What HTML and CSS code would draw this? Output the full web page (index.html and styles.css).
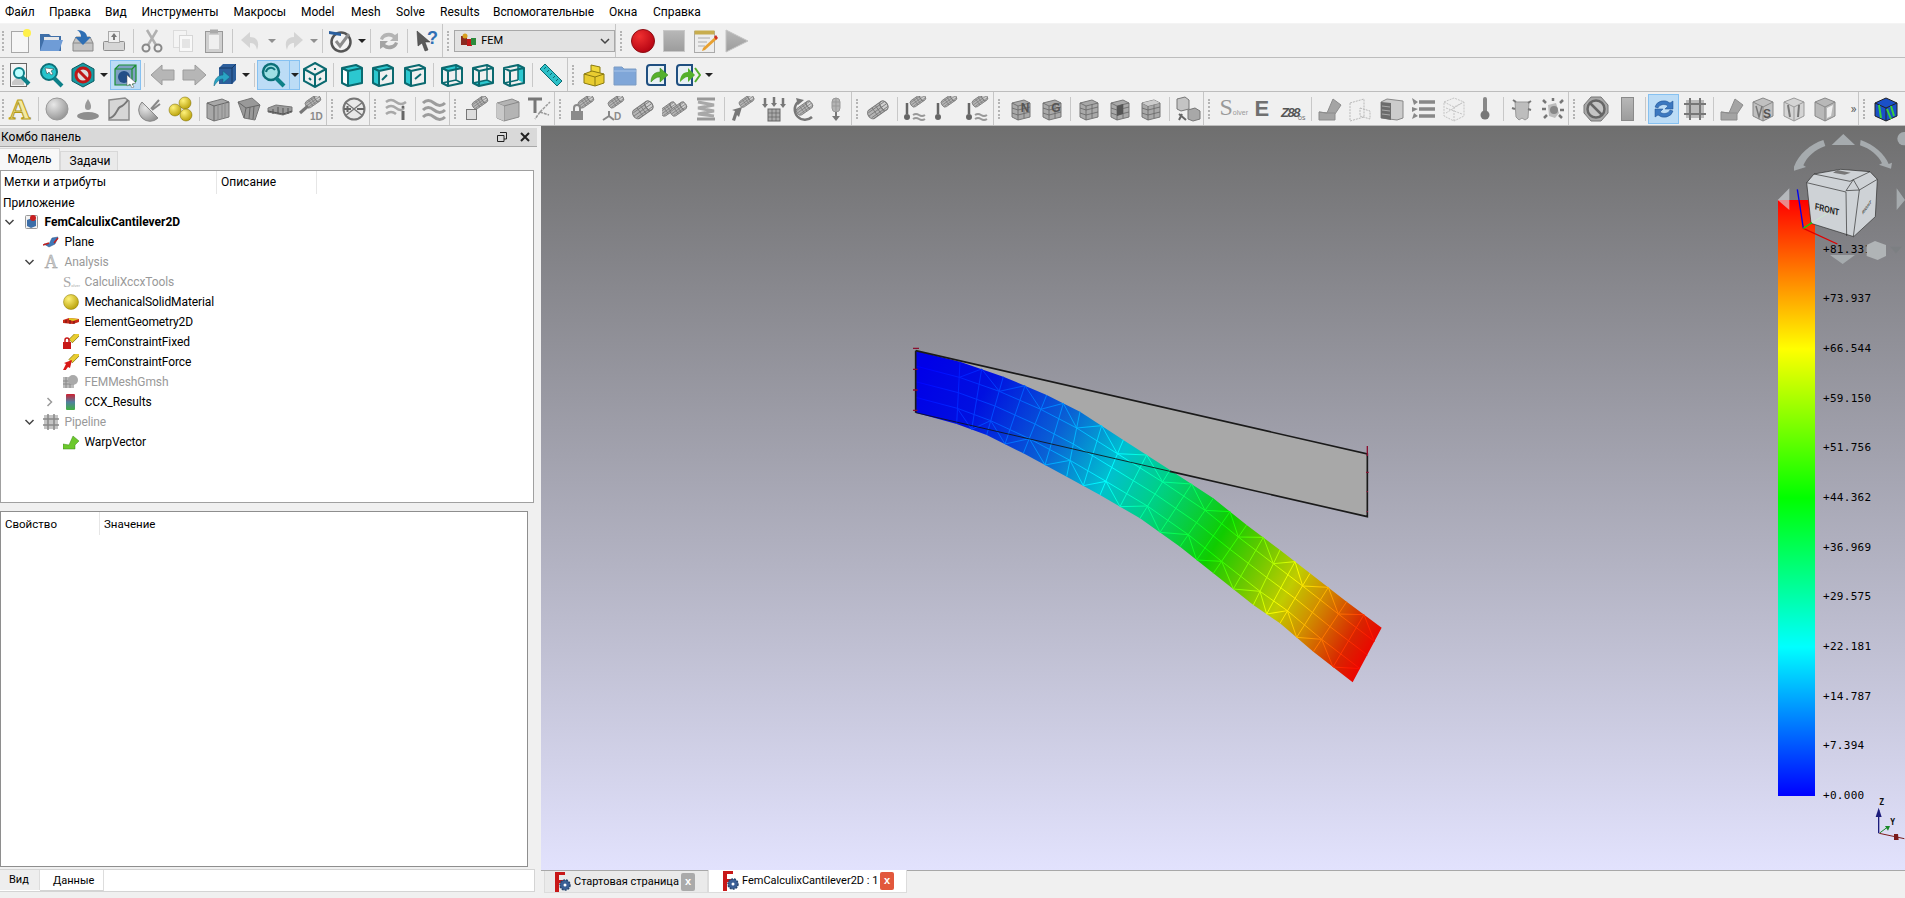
FILE: index.html
```html
<!DOCTYPE html>
<html lang="ru">
<head>
<meta charset="utf-8">
<title>FreeCAD</title>
<link rel="stylesheet" href="styles.css">
</head>
<body>
<svg class="defs" aria-hidden="true">
<defs>
<radialGradient id="gs" cx=".35" cy=".3" r=".8"><stop offset="0" stop-color="#e8e8e8"/><stop offset="1" stop-color="#8e8e8e"/></radialGradient>
<radialGradient id="gy" cx=".35" cy=".3" r=".8"><stop offset="0" stop-color="#fff27a"/><stop offset="1" stop-color="#b39a00"/></radialGradient>
<radialGradient id="gr" cx=".35" cy=".3" r=".8"><stop offset="0" stop-color="#f03030"/><stop offset="1" stop-color="#b00010"/></radialGradient>
<linearGradient id="gst" x1="0" y1="0" x2="0" y2="1"><stop offset="0" stop-color="#b8b8b8"/><stop offset="1" stop-color="#9c9c9c"/></linearGradient>
<linearGradient id="gbar" x1="0" y1="0" x2="0" y2="1"><stop offset="0" stop-color="#d02030"/><stop offset=".5" stop-color="#5080a0"/><stop offset="1" stop-color="#40b040"/></linearGradient>
<g id="mcg" transform="rotate(-35 13 13)"><path d="M4 8h15a3.5 5 0 0 1 0 10H4a3.500 5 0 0 1 0-10z" fill="#b4b4b4" stroke="#777"/><ellipse cx="19" cy="13" rx="3.500" ry="5" fill="#cfcfcf" stroke="#777"/><path d="M8 8v10M12 8v10M16 8v10M1 13h21M2 10h20M2 16h20" stroke="#777" stroke-width=".8" fill="none"/></g>
<g id="thg"><path d="M4 4v11" stroke="#666" stroke-width="2.500"/><circle cx="4" cy="18" r="3" fill="#666"/></g>
<g id="wvg"><path d="M10 17q3-2 6 0t6 0M10 21q3-2 6 0t6 0" fill="none" stroke="#999" stroke-width="2"/></g>
<g id="bxg" fill="none" stroke="#0b6a70" stroke-width="2" stroke-linejoin="round"><path d="M3 6l14-3 6 3v15l-14 3-6-3zM3 6l6 3 14-3M9 9v15"/></g>
<g id="mbg"><path d="M4 7l12-3 6 3v14l-12 3-6-3z" fill="#a9a9a9" stroke="#777"/><path d="M10 10v14M16 8v14M4 12l6 2 12-3M4 17l6 2 12-3M4 7l6 3 12-3" stroke="#666" fill="none" stroke-width=".8"/></g>
</defs>

<symbol id="new" viewBox="0 0 26 26"><rect x="4.500" y="3.500" width="17" height="21" fill="#f6f6f6" stroke="#a8a8a8"/><circle cx="20" cy="5" r="4" fill="#fff04a"/></symbol>
<symbol id="open" viewBox="0 0 26 26"><path d="M2 6h9l2 2h10v15H2z" fill="#3f6fa8"/><path d="M6 9h15v6H6z" fill="#e8e8e8"/><path d="M2 23l4-11h19l-4 11z" fill="#6f9cd6"/></symbol>
<symbol id="save" viewBox="0 0 26 26"><path d="M3 15l3-6h14l3 6v8H3z" fill="#c4c4c4" stroke="#8a8a8a"/><path d="M3 15h20" stroke="#8a8a8a"/><path d="M7 2c6 0 10 3 10 7h4l-8 8-8-8h6c0-3-1-5-4-7z" fill="#2f6fb4"/></symbol>
<symbol id="print" viewBox="0 0 26 26"><rect x="2.500" y="13.500" width="21" height="9" rx="1" fill="#d6d6d6" stroke="#8e8e8e"/><rect x="7.500" y="3.500" width="11" height="11" fill="#efefef" stroke="#aaa"/><path d="M13 5l-3 4h2v3h2V9h2z" fill="#777"/></symbol>
<symbol id="cut" viewBox="0 0 26 26"><path d="M8 2l9 15M18 2L9 17" stroke="#b0b0b0" stroke-width="2.500" fill="none"/><circle cx="7" cy="20" r="3.500" fill="none" stroke="#888" stroke-width="2"/><circle cx="19" cy="20" r="3.500" fill="none" stroke="#888" stroke-width="2"/></symbol>
<symbol id="copy" viewBox="0 0 26 26"><rect x="3.500" y="2.500" width="13" height="17" fill="#f4f4f4" stroke="#dcdcdc"/><rect x="9.500" y="7.500" width="13" height="16" fill="#f8f8f8" stroke="#d6d6d6"/><rect x="12" y="11" width="8" height="9" fill="#e4e4e4"/></symbol>
<symbol id="paste" viewBox="0 0 26 26"><rect x="4.500" y="3.500" width="17" height="21" fill="#cfcfcf" stroke="#999"/><rect x="8" y="7" width="10" height="14" fill="#efefef"/><rect x="9" y="1.500" width="8" height="4" fill="#aaa"/></symbol>
<symbol id="undo" viewBox="0 0 26 26"><path d="M12 4L3 12l9 8v-5c4 0 6 2 7 7 3-8 0-13-7-13z" fill="#d4d4d4"/></symbol>
<symbol id="redo" viewBox="0 0 26 26"><path d="M14 4l9 8-9 8v-5c-4 0-6 2-7 7-3-8 0-13 7-13z" fill="#d4d4d4"/></symbol>
<symbol id="macro" viewBox="0 0 26 26"><circle cx="13" cy="14" r="9.500" fill="#f4f4f4" stroke="#555" stroke-width="2.500"/><path d="M8 13l4 5 9-12" fill="none" stroke="#8c8c8c" stroke-width="3"/><path d="M1 3l12 2v3L1 6z" fill="#2a5f9e"/></symbol>
<symbol id="refr" viewBox="0 0 26 26"><path d="M4 11a9 8 0 0 1 15-4l3-2v8h-8l3-3a6 5 0 0 0-10 2z" fill="#b4b4b4"/><path d="M22 15a9 8 0 0 1-15 4l-3 2v-8h8l-3 3a6 5 0 0 0 10-2z" fill="#a4a4a4"/></symbol>
<symbol id="arrow" viewBox="0 0 26 26"><path d="M3 3l13 11h-5l3 8-3 1-3-8-4 3z" fill="#5a5a5a" stroke="#333" stroke-width=".5"/></symbol>
<symbol id="femc" viewBox="0 0 18 18"><rect x="1" y="4" width="6" height="9" fill="#8a2a20"/><rect x="7" y="7" width="5" height="7" fill="#c01818"/><rect x="11" y="6" width="5" height="7" fill="#2c8a3c"/><circle cx="5" cy="4" r="2.500" fill="#d8a020"/></symbol>
<symbol id="rec" viewBox="0 0 26 26"><circle cx="13" cy="13" r="11.500" fill="url(#gr)" stroke="#8e0e14"/></symbol>
<symbol id="stop" viewBox="0 0 26 26"><rect x="2.500" y="2.500" width="21" height="21" fill="url(#gst)" stroke="#c8c8c8"/></symbol>
<symbol id="note" viewBox="0 0 26 26"><rect x="2.500" y="3.500" width="20" height="21" fill="#ededed" stroke="#aaa"/><rect x="2.500" y="2.500" width="20" height="4" fill="#c8ad4e"/><path d="M6 10h12M6 14h9M6 18h7" stroke="#aaa"/><path d="M11 20l12-11 2 2-12 11-3 1z" fill="#e8a030"/><path d="M22 9l2-2 2 3-2 2z" fill="#d03020"/></symbol>
<symbol id="play" viewBox="0 0 26 26"><path d="M3 2l22 11L3 24z" fill="url(#gst)" stroke="#c4c4c4"/></symbol>

<symbol id="fit" viewBox="0 0 26 26"><rect x="3.500" y="1.500" width="16" height="23" fill="#f4f4f4" stroke="#666"/><path d="M5 20l6-6 6 6v3H5z" fill="#c8c8c8"/><path d="M15 15l7 7" stroke="#0d8088" stroke-width="4"/><circle cx="12" cy="11" r="5" fill="#bff" stroke="#0d8088" stroke-width="2"/></symbol>
<symbol id="zsel" viewBox="0 0 26 26"><circle cx="11" cy="10" r="8" fill="#27c4cc" stroke="#0d7078" stroke-width="2"/><path d="M16 16l8 8" stroke="#0d8088" stroke-width="4"/><path d="M7 6l9 1-3 2 2 3-2 1-2-3-2 2z" fill="#fff" stroke="#333" stroke-width=".5"/></symbol>
<symbol id="nodr" viewBox="0 0 26 26"><path d="M13 1l11 6v12l-11 6-11-6V7z" fill="#189aa2" stroke="#0b5a60"/><circle cx="13" cy="13" r="7" fill="#ddd" stroke="#c01818" stroke-width="3"/><path d="M8 8l10 10" stroke="#c01818" stroke-width="3"/></symbol>
<symbol id="sel" viewBox="0 0 26 26"><path d="M3 7l4-4h17v16l-4 4H3z" fill="#7fa0c4"/><path d="M3 7l4-4h17v16l-4 4H3zM3 7h17v16M20 7l4-4" fill="none" stroke="#1a9030" stroke-width="1.200"/><circle cx="12" cy="15" r="6" fill="#234f88"/><path d="M15 13l9 8-4 1 2 3-2 1-2-4-3 2z" fill="#fff" stroke="#555" stroke-width=".5"/></symbol>
<symbol id="left" viewBox="0 0 26 26"><path d="M12 3L1 13l11 10v-5h12V8H12z" fill="#b6b6b6" stroke="#9c9c9c"/></symbol>
<symbol id="right" viewBox="0 0 26 26"><path d="M14 3l11 10-11 10v-5H2V8h12z" fill="#b6b6b6" stroke="#9c9c9c"/></symbol>
<symbol id="nav" viewBox="0 0 26 26"><path d="M7 6l4-4h13v16l-4 4H7z" fill="#2d5f9c"/><path d="M7 6h13v16M20 6l4-4" fill="none" stroke="#173a66"/><path d="M2 24c0-7 4-11 9-11V9l7 6-7 6v-4c-4 0-6 3-9 7z" fill="#2aa4c4" stroke="#14607a" stroke-width=".5"/></symbol>
<symbol id="zoom" viewBox="0 0 26 26"><circle cx="11" cy="10" r="8" fill="#9fe0e4" stroke="#0d7078" stroke-width="2.500"/><path d="M16 16l8 8" stroke="#0d8088" stroke-width="4"/><path d="M6 10a5 5 0 0 1 9-2" fill="none" stroke="#0d7078" stroke-width="2"/></symbol>
<symbol id="viso" viewBox="0 0 26 26"><path d="M13 1l11 6v12l-11 6-11-6V7zM2 7l11 6 11-6M13 13v12" fill="none" stroke="#0b6a70" stroke-width="2"/><path d="M7 16l2 2M19 16l-2 2M13 6v2" stroke="#0b6a70" stroke-width="2"/></symbol>
<symbol id="vf" viewBox="0 0 26 26"><path d="M3 6l6 3v15l-6-3z" fill="#fff"/><path d="M3 6l14-3 6 3-14 3z" fill="#2cc8d0"/><path d="M9 9l14-3v15l-14 3z" fill="#2cc8d0"/><use href="#bxg"/></symbol>
<symbol id="vt" viewBox="0 0 26 26"><path d="M3 6l14-3 6 3-14 3z" fill="#2cc8d0"/><path d="M3 6l6 3v15l-6-3z" fill="#2cc8d0"/><use href="#bxg"/><path d="M12 18l5-5" stroke="#0b6a70" stroke-width="2"/></symbol>
<symbol id="vr" viewBox="0 0 26 26"><path d="M3 6l6 3v15l-6-3z" fill="#2cc8d0"/><use href="#bxg"/><path d="M13 17l6-5" stroke="#0b6a70" stroke-width="2"/></symbol>
<symbol id="vb1" viewBox="0 0 26 26"><path d="M3 6l14-3 6 3-14 3z" fill="#2cc8d0"/><use href="#bxg"/><path d="M3 21l14-3 6 3M17 3v15" fill="none" stroke="#0b6a70" stroke-width="1.500"/></symbol>
<symbol id="vb2" viewBox="0 0 26 26"><path d="M3 21l14-3 6 3-14 3z" fill="#2cc8d0"/><use href="#bxg"/><path d="M3 21l14-3 6 3M17 3v15" fill="none" stroke="#0b6a70" stroke-width="1.500"/></symbol>
<symbol id="vb3" viewBox="0 0 26 26"><path d="M17 3l6 3v15l-6-3z" fill="#2cc8d0"/><use href="#bxg"/><path d="M3 21l14-3M17 3v15" fill="none" stroke="#0b6a70" stroke-width="1.500"/></symbol>
<symbol id="ruler" viewBox="0 0 26 26"><path d="M2 7l5-5 17 17-5 5z" fill="#2cc0c8" stroke="#0b6a70"/><path d="M6 7l2-2M9 10l2-2M12 13l2-2M15 16l2-2M18 19l2-2" stroke="#0b6a70"/></symbol>
<symbol id="fem" viewBox="0 0 26 26"><path d="M10 3l9 2v7l-9-2z" fill="#f0d838" stroke="#8a7a10"/><path d="M3 12l8-3 12 3v9l-9 3-11-3z" fill="#e8cc30" stroke="#8a7a10"/><path d="M14 15v9M3 12l11 3 9-3" fill="none" stroke="#8a7a10"/></symbol>
<symbol id="fold" viewBox="0 0 26 26"><path d="M2 5h8l2 2h12v16H2z" fill="#7fa6d8" stroke="#7c9cc4"/><path d="M2 9h22" stroke="#a8c4e8"/></symbol>
<symbol id="exp" viewBox="0 0 26 26"><path d="M6 3h15v20H6a3 3 0 0 1-3-3V6a3 3 0 0 1 3-3z" fill="#e8f0f4" stroke="#1f4f80" stroke-width="2"/><path d="M7 20c0-6 3-10 9-10V6l8 7-8 7v-5c-4 0-6 2-9 5z" fill="#54b02c" stroke="#2f7a14" stroke-width=".5"/></symbol>
<symbol id="exp2" viewBox="0 0 26 26"><path d="M5 3h12v20H5a3 3 0 0 1-3-3V6a3 3 0 0 1 3-3z" fill="#e8f0f4" stroke="#1f4f80" stroke-width="2"/><path d="M5 20c0-6 3-10 8-10V6l7 7-7 7v-5c-3 0-5 2-8 5z" fill="#54b02c"/><path d="M20 6l5 7-5 7" fill="none" stroke="#54b02c" stroke-width="2"/></symbol>

<symbol id="sph" viewBox="0 0 26 26"><circle cx="13" cy="13" r="11" fill="url(#gs)" stroke="#999"/></symbol>
<symbol id="drop" viewBox="0 0 26 26"><ellipse cx="13" cy="20" rx="11" ry="4" fill="#8e8e8e"/><path d="M13 3c3 5 3 6 3 8a3 3 0 0 1-6 0c0-2 0-3 3-8z" fill="#999"/></symbol>
<symbol id="graph" viewBox="0 0 26 26"><path d="M3 4l16-2 4 3v19H3z" fill="#d6d6d6" stroke="#8a8a8a" stroke-width="1.500"/><path d="M3 22c7 0 8-10 11-11s5-3 8-7" fill="none" stroke="#777" stroke-width="2"/></symbol>
<symbol id="dish" viewBox="0 0 26 26"><path d="M5 6a11 11 0 0 0 16 16z" fill="url(#gs)" stroke="#888"/><path d="M14 13l8-9M15 14l8-6" stroke="#888" stroke-width="2"/></symbol>
<symbol id="balls" viewBox="0 0 26 26"><circle cx="17" cy="7" r="6" fill="url(#gy)" stroke="#7a6a00" stroke-width=".5"/><circle cx="7" cy="14" r="6" fill="url(#gy)" stroke="#7a6a00" stroke-width=".5"/><circle cx="18" cy="19" r="6" fill="url(#gy)" stroke="#7a6a00" stroke-width=".5"/></symbol>
<symbol id="blk" viewBox="0 0 26 26"><path d="M2 7l15-4 7 3v15l-15 4-7-3z" fill="#a8a8a8" stroke="#777"/><path d="M2 7l7 3 15-4M9 10v15" fill="none" stroke="#666"/><path d="M13 9v15M17 8v15M20 7v15" stroke="#8a8a8a"/></symbol>
<symbol id="blk2" viewBox="0 0 26 26"><path d="M2 6l14-4 8 7-5 15-11-2z" fill="#999" stroke="#777"/><path d="M2 6l8 6 14-3M10 12l-2 10M14 11l-1 12M18 10l-1 13" fill="none" stroke="#666"/></symbol>
<symbol id="plate" viewBox="0 0 26 26"><path d="M1 12l8-3 16 2v5l-9 3-15-3z" fill="#9a9a9a" stroke="#777"/><path d="M6 13v5M11 11v7M16 12v7M21 12v6M1 15l15 3 9-3" fill="none" stroke="#555"/></symbol>
<symbol id="pm" viewBox="0 0 26 26"><circle cx="13" cy="13" r="10.500" fill="#e8e8e8" stroke="#777" stroke-width="2"/><path d="M4 6l18 14M22 6L4 20" stroke="#777" stroke-width="1.500"/><path d="M3 13h7M6.500 10v6M16 13h7" stroke="#666" stroke-width="2"/></symbol>
<symbol id="eqi" viewBox="0 0 26 26"><path d="M2 6q5-4 10 0t10 0M2 12q5-4 10 0t8 0M2 18q5-4 10 0" fill="none" stroke="#a8a8a8" stroke-width="2.500"/><path d="M19 15v9" stroke="#666" stroke-width="3"/><circle cx="19" cy="11" r="1.500" fill="#666"/></symbol>
<symbol id="waves" viewBox="0 0 26 26"><path d="M2 7q5-5 11 0t11 0M2 14q5-5 11 0t11 0M2 21q5-5 11 0t11 0" fill="none" stroke="#9c9c9c" stroke-width="3"/></symbol>
<symbol id="mc" viewBox="0 0 26 26"><use href="#mcg"/></symbol>
<symbol id="mcf" viewBox="0 0 26 26"><g transform="translate(7 -4) scale(.75)"><use href="#mcg"/></g><rect x="2.500" y="13.500" width="10" height="10" fill="#ddd" stroke="#777"/></symbol>
<symbol id="box" viewBox="0 0 26 26"><path d="M2 7l15-4 7 3v15l-15 4-7-3z" fill="#b4b4b4" stroke="#8c8c8c"/><path d="M2 7l7 3 15-4M9 10v15" fill="none" stroke="#888"/><path d="M2 7l7 3v15l-7-3z" fill="#c8c8c8"/></symbol>
<symbol id="tax" viewBox="0 0 26 26"><path d="M2 3h14M9 3v14" stroke="#777" stroke-width="3"/><path d="M14 16l10-10M14 16l9 3M14 16l-5 7" stroke="#999" stroke-width="1.500" stroke-dasharray="3 1"/></symbol>
<symbol id="mcl" viewBox="0 0 26 26"><g transform="translate(8 -5) scale(.75)"><use href="#mcg"/></g><rect x="2" y="15" width="12" height="9" fill="#8a8a8a"/><path d="M5 15v-3a3 3 0 0 1 6 0v3" fill="none" stroke="#8a8a8a" stroke-width="2"/></symbol>
<symbol id="mc2" viewBox="0 0 26 26"><g transform="translate(-3 2) scale(.8)"><use href="#mcg"/></g><g transform="translate(7 2) scale(.8)"><use href="#mcg"/></g></symbol>
<symbol id="spring" viewBox="0 0 26 26"><path d="M4 3h18M4 23h18" stroke="#999" stroke-width="3"/><path d="M5 6l16 3-16 3 16 3-16 3 16 2" fill="none" stroke="#a8a8a8" stroke-width="3"/></symbol>
<symbol id="mca" viewBox="0 0 26 26"><g transform="translate(8 -5) scale(.72)"><use href="#mcg"/></g><path d="M2 24l3-9-3-1 10-3-3 10-2-2-2 6z" fill="#777"/></symbol>
<symbol id="mcdn" viewBox="0 0 26 26"><path d="M4 2v7M13 1v7M22 2v7" stroke="#777" stroke-width="2.500"/><path d="M1 8h6l-3 4zM10 7h6l-3 4zM19 8h6l-3 4z" fill="#777"/><rect x="7" y="13" width="12" height="12" fill="#aaa" stroke="#666"/><path d="M11 13v12M15 13v12M7 17h12M7 21h12" stroke="#666" stroke-width=".7"/></symbol>
<symbol id="mcrot" viewBox="0 0 26 26"><g transform="translate(3 1) scale(.8)"><use href="#mcg"/></g><path d="M6 6a10 10 0 1 0 14 15" fill="none" stroke="#777" stroke-width="2.500"/><path d="M4 2l8 2-6 5z" fill="#777"/></symbol>
<symbol id="mcv" viewBox="0 0 26 26"><rect x="9" y="2" width="8" height="14" rx="4" fill="#b4b4b4" stroke="#999"/><path d="M9 6h8M9 10h8M13 2v14" stroke="#999"/><path d="M13 16v5" stroke="#777" stroke-width="2"/><path d="M9 20h8l-4 5z" fill="#777"/></symbol>
<symbol id="t1" viewBox="0 0 26 26"><g transform="translate(6 -6) scale(.75)"><use href="#mcg"/></g><use href="#thg" transform="translate(0 3)"/><use href="#wvg" transform="translate(0 2)"/></symbol>
<symbol id="t2" viewBox="0 0 26 26"><g transform="translate(6 -6) scale(.75)"><use href="#mcg"/></g><use href="#thg" transform="translate(0 3)"/></symbol>
<symbol id="mb" viewBox="0 0 26 26"><use href="#mbg"/></symbol>
<symbol id="mb2" viewBox="0 0 26 26"><use href="#mbg"/><path d="M10 10l6-2v10l-6 2z" fill="#555"/></symbol>
<symbol id="mb3" viewBox="0 0 26 26"><use href="#mbg"/><path d="M4 7l6 3 12-3-6-3z" fill="#ccc"/></symbol>
<symbol id="twoc" viewBox="0 0 26 26"><path d="M2 3l8-2 4 3v9l-8 2-4-2z" fill="#c4c4c4" stroke="#777"/><path d="M13 14l7-2 5 3v8l-7 2-5-2z" fill="#a8a8a8" stroke="#777"/><path d="M4 18l7 6M4 24l3-6" stroke="#666" stroke-width="2"/></symbol>
<symbol id="warp" viewBox="0 0 26 26"><path d="M2 24v-8l8 1 6-14 8 6-6 9v6z" fill="#a4a4a4" stroke="#8c8c8c"/><path d="M2 16l8 1 8 0" fill="none" stroke="#8c8c8c"/></symbol>
<symbol id="dash" viewBox="0 0 26 26"><path d="M2 7l14-4v18l-14 4zM12 12l10 3v8l-10-3z" fill="none" stroke="#b8b8b8" stroke-dasharray="2 1"/></symbol>
<symbol id="half" viewBox="0 0 26 26"><path d="M2 6l6-3 16 2v17l-6 2-16-2z" fill="#ccc" stroke="#888"/><path d="M2 6l10 1v17l-10-2z" fill="#6c6c6c"/><path d="M3 10l8 1M3 14l8 1M3 18l8 1" stroke="#aaa"/></symbol>
<symbol id="arrs" viewBox="0 0 26 26"><path d="M9 6h16M9 13h16M9 20h16" stroke="#888" stroke-width="3.500"/><path d="M2 2l6 4-4 3zM2 11l6 2-6 3zM2 23l6-3-4-3z" fill="#888"/></symbol>
<symbol id="dcube" viewBox="0 0 26 26"><path d="M3 6l10-4 10 4v14l-10 5-10-5zM3 6l10 5 10-5M13 11v14M5 12l16 6M5 17l16-10" fill="none" stroke="#c4c4c4" stroke-dasharray="2 1"/></symbol>
<symbol id="thermo" viewBox="0 0 26 26"><path d="M13 3v14" stroke="#888" stroke-width="4" stroke-linecap="round"/><circle cx="13" cy="19" r="4.500" fill="#777"/></symbol>
<symbol id="spl" viewBox="0 0 26 26"><path d="M6 6h14l-1 16-3 2-3-2-3 2-3-3z" fill="#bdbdbd" stroke="#999"/><path d="M4 4l3 2M22 5l-3 2M3 12l3 1M22 14l-3-1" stroke="#777" stroke-width="2"/></symbol>
<symbol id="spl2" viewBox="0 0 26 26"><path d="M8 9l8-2 3 10-4 5-6-2z" fill="#bdbdbd"/><circle cx="14" cy="14" r="4" fill="#888"/><path d="M3 4l3 3M13 2v3M23 4l-3 3M2 13h4M24 14h-4M4 22l3-3M22 22l-3-3" stroke="#777" stroke-width="2.500"/></symbol>
<symbol id="nos" viewBox="0 0 26 26"><path d="M8 1h10l7 8v8l-7 8H8l-7-8V9z" fill="#a8a8a8" stroke="#777"/><circle cx="13" cy="13" r="8.500" fill="#c4c4c4" stroke="#666" stroke-width="2.500"/><path d="M7 7l12 12" stroke="#666" stroke-width="2.500"/></symbol>
<symbol id="rect" viewBox="0 0 26 26"><rect x="7.500" y="1.500" width="12" height="23" fill="url(#gst)" stroke="#8a8a8a"/></symbol>
<symbol id="refb" viewBox="0 0 26 26"><path d="M4 11a9 8 0 0 1 15-4l3-2v8h-8l3-3a6 5 0 0 0-10 2z" fill="#3c78c0" stroke="#1f4f8c" stroke-width=".5"/><path d="M22 15a9 8 0 0 1-15 4l-3 2v-8h8l-3 3a6 5 0 0 0 10-2z" fill="#3c78c0" stroke="#1f4f8c" stroke-width=".5"/></symbol>
<symbol id="grid" viewBox="0 0 26 26"><rect x="4" y="4" width="18" height="18" fill="#bbb"/><path d="M2 8h22M2 18h22M8 2v22M18 2v22" stroke="#777" stroke-width="2"/></symbol>
<symbol id="sl1" viewBox="0 0 26 26"><path d="M3 6l10-4 10 4v14l-10 5-10-5z" fill="#d4d4d4" stroke="#999"/><path d="M3 6l10 5 10-5M13 11v14" fill="none" stroke="#999"/><path d="M7 9l2 12M18 9l-1 12" stroke="#777" stroke-width="2"/></symbol>
<symbol id="sl2" viewBox="0 0 26 26"><path d="M3 6l10-4 10 4v14l-10 5-10-5z" fill="#b8b8b8" stroke="#888"/><path d="M3 6l10 5 10-5M13 11v14" fill="none" stroke="#888"/><path d="M15 12l6-3-2 11-4 2z" fill="#eee"/></symbol>
<symbol id="colc" viewBox="0 0 26 26"><path d="M2 7l11-5 11 5v13l-11 5-11-5z" fill="#1a50c8" stroke="#222"/><path d="M2 7l11 5 11-5M13 12v13" fill="none" stroke="#222"/><path d="M6 9l2 13M18 10l3 10M14 13l4 10" stroke="#3ad03a" stroke-width="2"/></symbol>

<symbol id="tdoc" viewBox="0 0 16 16"><rect x="2.500" y="1.500" width="12" height="13" rx="1" fill="#f2f2f2" stroke="#999"/><path d="M4 6l5-2 4 2v6l-5 2-4-2z" fill="#3c6ea8"/><circle cx="10" cy="4" r="3" fill="#c82020"/></symbol>
<symbol id="tplane" viewBox="0 0 16 16"><path d="M1 10l5 0 3-6 6-1-3 7-6 3z" fill="#3f78b8" stroke="#2a4f80" stroke-width=".5"/><path d="M0 11l6-2M11 9l4-5" stroke="#c02020" stroke-width="1.500"/></symbol>
<symbol id="tball" viewBox="0 0 16 16"><circle cx="8" cy="8" r="7.500" fill="url(#gy)" stroke="#8a7800" stroke-width=".5"/></symbol>
<symbol id="tele" viewBox="0 0 16 16"><path d="M0 6l6-2 10 1v3l-6 2-10-1z" fill="#c82818"/><path d="M6 4l10 1-6 2-4-1z" fill="#e0c820"/><path d="M3 6v3M7 6v4M11 7v3" stroke="#6a1010"/></symbol>
<symbol id="tfix" viewBox="0 0 16 16"><g transform="translate(6 -3) scale(.42)"><path d="M0 20l20-20 8 8-20 20z" fill="#e8cc30" stroke="#8a7a10" stroke-width="2"/></g><rect x="0" y="8" width="8" height="7" fill="#c81818"/><path d="M2 8V6a2 2 0 0 1 4 0v2" fill="none" stroke="#c81818" stroke-width="1.500"/></symbol>
<symbol id="tfor" viewBox="0 0 16 16"><g transform="translate(6 -3) scale(.42)"><path d="M0 20l20-20 8 8-20 20z" fill="#e8cc30" stroke="#8a7a10" stroke-width="2"/></g><path d="M0 16l3-6-2-1 8-3-2 8-2-1-3 4z" fill="#d81818"/></symbol>
<symbol id="tmesh" viewBox="0 0 16 16"><rect x="0" y="3" width="11" height="11" fill="#bbb"/><path d="M3 3v11M7 3v11M0 7h11M0 10h11" stroke="#888"/><circle cx="10" cy="6" r="5" fill="#aaa"/></symbol>
<symbol id="tbar" viewBox="0 0 16 16"><rect x="3" y="0" width="9" height="16" rx="1" fill="url(#gbar)"/></symbol>
<symbol id="tgrid" viewBox="0 0 16 16"><rect x="1" y="1" width="14" height="14" fill="#c4c4c4"/><path d="M0 5h16M0 11h16M5 0v16M11 0v16" stroke="#888" stroke-width="1.500"/></symbol>
<symbol id="twarp" viewBox="0 0 16 16"><path d="M0 15v-5l6 1 4-9 6 5-4 4v4z" fill="#6cc82c" stroke="#3a8a14" stroke-width=".5"/></symbol>
<symbol id="tabf" viewBox="0 0 16 20"><path d="M0 0h10v3H4v5h5v3H4v9H0z" fill="#c81818"/><circle cx="10" cy="13" r="5" fill="#3a5f96" stroke="#26456f" stroke-width="1.500" stroke-dasharray="2 1"/><circle cx="10" cy="13" r="1.500" fill="#fff"/></symbol>
<symbol id="chd" viewBox="0 0 10 10"><path d="M1 3l4 4 4-4" fill="none" stroke="#444" stroke-width="1.500"/></symbol>
<symbol id="chr" viewBox="0 0 10 10"><path d="M3 1l4 4-4 4" fill="none" stroke="#9a9a9a" stroke-width="1.500"/></symbol>
</svg>

<div class="app">
  <nav class="menu">
    <span class="mi m0">Файл</span><span class="mi m1">Правка</span><span class="mi m2">Вид</span><span class="mi m3">Инструменты</span><span class="mi m4">Макросы</span><span class="mi m5">Model</span><span class="mi m6">Mesh</span><span class="mi m7">Solve</span><span class="mi m8">Results</span><span class="mi m9">Вспомогательные</span><span class="mi m10">Окна</span><span class="mi m11">Справка</span>
  </nav>

  <div class="tb tb12">
    <span class="b"><svg class="i"><use href="#new"/></svg></span><span class="b"><svg class="i"><use href="#open"/></svg></span><span class="b"><svg class="i"><use href="#save"/></svg></span><span class="b"><svg class="i"><use href="#print"/></svg></span><span class="sep"></span>
    <span class="b"><svg class="i"><use href="#cut"/></svg></span><span class="b"><svg class="i"><use href="#copy"/></svg></span><span class="b"><svg class="i"><use href="#paste"/></svg></span><span class="sep"></span>
    <span class="b"><svg class="i"><use href="#undo"/></svg></span><span class="dd off"></span><span class="b"><svg class="i"><use href="#redo"/></svg></span><span class="dd off"></span><span class="sep"></span>
    <span class="b"><svg class="i"><use href="#macro"/></svg></span><span class="dd"></span><span class="sep"></span>
    <span class="b"><svg class="i"><use href="#refr"/></svg></span><span class="sep"></span>
    <span class="b whats"><svg class="i"><use href="#arrow"/></svg><span class="qm">?</span></span><span class="brk"></span>
    <div class="combo"><svg class="ci"><use href="#femc"/></svg><span class="ct">FEM</span><svg class="cc"><use href="#chd"/></svg></div><span class="brk"></span>
    <span class="b"><svg class="i"><use href="#rec"/></svg></span><span class="b"><svg class="i"><use href="#stop"/></svg></span><span class="b"><svg class="i"><use href="#note"/></svg></span><span class="b"><svg class="i"><use href="#play"/></svg></span>
  </div>

  <div class="tb tb12">
    <span class="b"><svg class="i"><use href="#fit"/></svg></span><span class="b"><svg class="i"><use href="#zsel"/></svg></span><span class="b"><svg class="i"><use href="#nodr"/></svg></span><span class="dd"></span><span class="b act"><svg class="i"><use href="#sel"/></svg></span><span class="sep"></span>
    <span class="b"><svg class="i"><use href="#left"/></svg></span><span class="b"><svg class="i"><use href="#right"/></svg></span><span class="b"><svg class="i"><use href="#nav"/></svg></span><span class="dd"></span><span class="sep"></span>
    <span class="split"><span class="b"><svg class="i"><use href="#zoom"/></svg></span><span class="dd"></span></span><span class="b"><svg class="i"><use href="#viso"/></svg></span><span class="sep"></span>
    <span class="b"><svg class="i"><use href="#vf"/></svg></span><span class="b"><svg class="i"><use href="#vt"/></svg></span><span class="b"><svg class="i"><use href="#vr"/></svg></span><span class="sep"></span>
    <span class="b"><svg class="i"><use href="#vb1"/></svg></span><span class="b"><svg class="i"><use href="#vb2"/></svg></span><span class="b"><svg class="i"><use href="#vb3"/></svg></span><span class="sep"></span>
    <span class="b"><svg class="i"><use href="#ruler"/></svg></span><span class="brk"></span>
    <span class="b"><svg class="i"><use href="#fem"/></svg></span><span class="b"><svg class="i"><use href="#fold"/></svg></span><span class="b"><svg class="i"><use href="#exp"/></svg></span><span class="b"><svg class="i"><use href="#exp2"/></svg></span><span class="dd"></span>
  </div>

  <div class="tb tb3">
    <span class="b"><span class="ta-big">A</span></span><span class="sep"></span>
    <span class="b"><svg class="i"><use href="#sph"/></svg></span><span class="b"><svg class="i"><use href="#drop"/></svg></span><span class="b"><svg class="i"><use href="#graph"/></svg></span><span class="b"><svg class="i"><use href="#dish"/></svg></span><span class="b"><svg class="i"><use href="#balls"/></svg></span><span class="sep"></span>
    <span class="b"><svg class="i"><use href="#blk"/></svg></span><span class="b"><svg class="i"><use href="#blk2"/></svg></span><span class="b"><svg class="i"><use href="#plate"/></svg></span><span class="b"><svg class="i" viewBox="0 0 26 26"><g transform="translate(6 -5) scale(.75)"><use href="#mcg"/></g><path d="M2 17l8-7" stroke="#777" stroke-width="3"/><text x="12" y="24" class="ti d">1D</text></svg></span><span class="brk"></span>
    <span class="b"><svg class="i"><use href="#pm"/></svg></span><span class="brk"></span>
    <span class="b"><svg class="i"><use href="#eqi"/></svg></span><span class="sep"></span><span class="b"><svg class="i"><use href="#waves"/></svg></span><span class="brk"></span>
    <span class="b"><svg class="i"><use href="#mcf"/></svg></span><span class="b"><svg class="i"><use href="#box"/></svg></span><span class="b"><svg class="i"><use href="#tax"/></svg></span><span class="brk"></span>
    <span class="b"><svg class="i"><use href="#mcl"/></svg></span><span class="b"><svg class="i" viewBox="0 0 26 26"><g transform="translate(7 -5) scale(.75)"><use href="#mcg"/></g><path d="M9 15v5l-6 4M9 20l5 4" fill="none" stroke="#888" stroke-width="2"/><text x="14" y="24" class="ti d">D</text></svg></span><span class="b"><svg class="i"><use href="#mc"/></svg></span><span class="b"><svg class="i"><use href="#mc2"/></svg></span><span class="b"><svg class="i"><use href="#spring"/></svg></span><span class="sep"></span>
    <span class="b"><svg class="i"><use href="#mca"/></svg></span><span class="b"><svg class="i"><use href="#mcdn"/></svg></span><span class="b"><svg class="i"><use href="#mcrot"/></svg></span><span class="b"><svg class="i"><use href="#mcv"/></svg></span><span class="brk"></span>
    <span class="b"><svg class="i"><use href="#mc"/></svg></span><span class="sep"></span>
    <span class="b"><svg class="i"><use href="#t1"/></svg></span><span class="b"><svg class="i"><use href="#t2"/></svg></span><span class="b"><svg class="i"><use href="#t1"/></svg></span><span class="brk"></span>
    <span class="b"><svg class="i" viewBox="0 0 26 26"><use href="#mbg"/><text x="17" y="16" class="ti n">N</text></svg></span><span class="b"><svg class="i" viewBox="0 0 26 26"><use href="#mbg"/><text x="17" y="16" class="ti n">G</text></svg></span><span class="sep"></span>
    <span class="b"><svg class="i"><use href="#mb"/></svg></span><span class="b"><svg class="i"><use href="#mb2"/></svg></span><span class="b"><svg class="i"><use href="#mb3"/></svg></span><span class="sep"></span>
    <span class="b"><svg class="i"><use href="#twoc"/></svg></span><span class="brk"></span>
    <span class="b solv"><span class="s-big">S</span><span class="s-small">olver</span></span><span class="b"><span class="e-big">E</span></span><span class="b"><svg class="i" viewBox="0 0 26 26"><text x="1" y="21" class="ti z">Z88</text><text x="18" y="24" class="ti os">OS</text></svg></span><span class="sep"></span>
    <span class="b"><svg class="i"><use href="#warp"/></svg></span><span class="b"><svg class="i"><use href="#dash"/></svg></span><span class="b"><svg class="i"><use href="#half"/></svg></span><span class="b"><svg class="i"><use href="#arrs"/></svg></span><span class="b"><svg class="i"><use href="#dcube"/></svg></span><span class="b"><svg class="i"><use href="#thermo"/></svg></span><span class="sep"></span>
    <span class="b"><svg class="i"><use href="#spl"/></svg></span><span class="b"><svg class="i"><use href="#spl2"/></svg></span><span class="brk"></span>
    <span class="b"><svg class="i"><use href="#nos"/></svg></span><span class="b"><svg class="i"><use href="#rect"/></svg></span><span class="sep"></span>
    <span class="b act"><svg class="i"><use href="#refb"/></svg></span><span class="b"><svg class="i"><use href="#grid"/></svg></span><span class="sep"></span>
    <span class="b"><svg class="i"><use href="#warp"/></svg></span><span class="b"><svg class="i" viewBox="0 0 26 26"><path d="M3 6l10-4 10 4v14l-10 5-10-5z" fill="#c0c0c0" stroke="#888"/><path d="M3 6l10 5 10-5M13 11v14" fill="none" stroke="#888"/><text x="17" y="22" class="ti n">S</text><path d="M6 10l3 11 3-11" fill="none" stroke="#777" stroke-width="1.500"/></svg></span><span class="b"><svg class="i"><use href="#sl1"/></svg></span><span class="b"><svg class="i"><use href="#sl2"/></svg></span><span class="more">»</span><span class="brk"></span>
    <span class="b"><svg class="i"><use href="#colc"/></svg></span>
  </div>

  <main class="main">
    <aside class="side">
      <header class="ptitle"><span>Комбо панель</span>
        <svg class="pbtn" viewBox="0 0 12 12"><path d="M4 1.500h6.500V8H8M1.500 4.500H8v6H1.500z" fill="none" stroke="#222"/></svg>
        <svg class="pbtn" viewBox="0 0 12 12"><path d="M2 2l8 8M10 2l-8 8" stroke="#222" stroke-width="2"/></svg>
      </header>
      <div class="tabs"><span class="tab on">Модель</span><span class="tab">Задачи</span></div>
      <section class="tree">
        <div class="thead"><span class="th c1">Метки и атрибуты</span><span class="th c2">Описание</span></div>
        <div class="approw">Приложение</div>
        <div class="row"><svg class="ch"><use href="#chd"/></svg><svg class="ic"><use href="#tdoc"/></svg><b>FemCalculixCantilever2D</b></div>
        <div class="row d1"><span class="ch"></span><svg class="ic"><use href="#tplane"/></svg><span>Plane</span></div>
        <div class="row d1 dim"><svg class="ch"><use href="#chd"/></svg><span class="ic ti-a">A</span><span>Analysis</span></div>
        <div class="row d2 dim"><span class="ch"></span><span class="ic ti-s">S<small>olver</small></span><span>CalculiXccxTools</span></div>
        <div class="row d2"><span class="ch"></span><svg class="ic"><use href="#tball"/></svg><span>MechanicalSolidMaterial</span></div>
        <div class="row d2"><span class="ch"></span><svg class="ic"><use href="#tele"/></svg><span>ElementGeometry2D</span></div>
        <div class="row d2"><span class="ch"></span><svg class="ic"><use href="#tfix"/></svg><span>FemConstraintFixed</span></div>
        <div class="row d2"><span class="ch"></span><svg class="ic"><use href="#tfor"/></svg><span>FemConstraintForce</span></div>
        <div class="row d2 dim"><span class="ch"></span><svg class="ic"><use href="#tmesh"/></svg><span>FEMMeshGmsh</span></div>
        <div class="row d2"><svg class="ch"><use href="#chr"/></svg><svg class="ic"><use href="#tbar"/></svg><span>CCX_Results</span></div>
        <div class="row d1 dim"><svg class="ch"><use href="#chd"/></svg><svg class="ic"><use href="#tgrid"/></svg><span>Pipeline</span></div>
        <div class="row d2"><span class="ch"></span><svg class="ic"><use href="#twarp"/></svg><span>WarpVector</span></div>
      </section>
      <section class="props">
        <div class="phead"><span class="ph c3">Свойство</span><span class="ph c4">Значение</span></div>
      </section>
      <div class="btabs"><span class="btab">Вид</span><span class="btab on">Данные</span></div>
    </aside>

    <div class="center">
      <div class="view">
        <svg class="beam" viewBox="0 0 1560 1110">
          <defs>
            <linearGradient id="fe" gradientUnits="userSpaceOnUse" x1="107" y1="155" x2="1480" y2="975">
              <stop offset="0" stop-color="#0000e8"/><stop offset=".12" stop-color="#0010e0"/><stop offset=".28" stop-color="#0a62d4"/><stop offset=".4" stop-color="#00c0d0"/><stop offset=".5" stop-color="#00d084"/><stop offset=".64" stop-color="#10cc00"/><stop offset=".72" stop-color="#68c800"/><stop offset=".8" stop-color="#c0cc00"/><stop offset=".86" stop-color="#d09000"/><stop offset=".95" stop-color="#d82400"/><stop offset="1" stop-color="#f00000"/>
            </linearGradient>
            <linearGradient id="fel" gradientUnits="userSpaceOnUse" x1="107" y1="155" x2="1480" y2="975">
              <stop offset="0" stop-color="#0000ff"/><stop offset=".12" stop-color="#0034ff"/><stop offset=".28" stop-color="#009cff"/><stop offset=".4" stop-color="#00ffff"/><stop offset=".5" stop-color="#00ff98"/><stop offset=".64" stop-color="#10ff00"/><stop offset=".72" stop-color="#88ff00"/><stop offset=".8" stop-color="#ffff00"/><stop offset=".86" stop-color="#ffb800"/><stop offset=".95" stop-color="#ff3000"/><stop offset="1" stop-color="#ff0000"/>
            </linearGradient>
          </defs>
          <path class="und" d="M107 62L1462 372V560L107 248z"/>
          <path fill="url(#fe)" d="M107 62L240 95 370 140 500 195 600 245 730 330 870 420 1000 505 1100 585 1200 660 1290 730 1400 815 1505 893 1418 1057 1300 965 1200 880 1120 825 1000 730 900 650 780 565 660 495 560 440 430 370 320 315 230 282 107 248z"/>
          <path class="msh" stroke="url(#fel)" d="M107 108L238 142 358 184 482 238 590 294 712 371 848 456 975 541 1075 621 1180 701 1268 768 1375 852 1483 934M107 155L235 188 345 228 465 282 580 342 695 412 825 492 950 578 1050 658 1160 742 1245 805 1350 890 1462 975M107 202L232 235 332 272 448 326 570 391 678 454 802 528 925 614 1025 694 1140 784 1222 842 1325 928 1440 1016M240 95L230 282M305 117L275 298M370 140L320 315M435 167L375 342M500 195L430 370M550 220L495 405M600 245L560 440M665 287L610 467M730 330L660 495M800 375L720 530M870 420L780 565M935 462L840 607M1000 505L900 650M1050 545L950 690M1100 585L1000 730M1150 622L1060 777M1200 660L1120 825M1245 695L1160 852M1290 730L1200 880M1345 772L1250 922M1400 815L1300 965M1452 854L1359 1011"/>
          <path class="msh" stroke="url(#fel)" d="M238 142L305 117 358 184 435 167 482 238 550 220 590 294 665 287 712 371 800 375 848 456 935 462 975 541 1050 545 1075 621 1150 622 1180 701 1245 695 1268 768 1345 772 1375 852 1452 854 1483 934M232 235L275 298 332 272 375 342 448 326 495 405 570 391 610 467 678 454 720 530 802 528 840 607 925 614 950 690 1025 694 1060 777 1140 784 1160 852 1222 842 1250 922 1325 928 1359 1011 1440 1016"/>
          <path class="und-l" d="M107 248L870 424"/>
          <path class="und-l2" d="M107 62V248M107 62L1462 372V560L870 424"/>
          <path class="mark" d="M99 55h18M99 118h14M99 180h14M99 241h14M1462 348v30M1458 427h8M1460 485h4M1460 545h4"/>
        </svg>

        <div class="legend">
          <div class="bar"></div>
          <ul class="labels">
            <li class="faint">+88.725</li><li>+81.331</li><li>+73.937</li><li>+66.544</li><li>+59.150</li><li>+51.756</li><li>+44.362</li><li>+36.969</li><li>+29.575</li><li>+22.181</li><li>+14.787</li><li>+7.394</li><li>+0.000</li>
          </ul>
        </div>

        <svg class="navcube" viewBox="0 18 495 432">
          <g fill="#a6abae">
            <path d="M275 75l35-33 35 33z"/>
            <path d="M162 140c15-38 48-67 88-80l6 18c-30 10-55 32-66 58l8 5-36 11z"/>
            <path d="M362 60c40 14 72 42 84 72l10-4-3 18-36-12 9-4c-11-24-36-44-66-54z"/>
            <path d="M470 205l25 35-25 30zM270 405h75l-37 27z"/>
            <circle cx="492" cy="56" r="20"/>
            <path class="nt" d="M113 240l35-35v65z"/>
            <path d="M380 375l25-12 33 12v33l-25 12-33-12z" fill="#b0b4b6"/>
            <path d="M450 380h36l-18 20z" fill="#7c7f82"/>
          </g>
          <path class="cb" d="M200 188l22-26 80-14 88 7 22 23-6 112-65 60-128-40z"/>
          <path class="cl" d="M200 188l118 28M358 210l54-32M320 348l-2-132M340 350l18-140M222 162l108 22M390 155l-60 29M318 212l22-33 18 31z"/>
          <path d="M292 150l40 8-18 6-35-6z" fill="#777"/>
          <text class="ft" transform="matrix(.75 .2 -.08 1 224 268)">FRONT</text>
          <text class="rt" transform="matrix(.6 -.8 .2 1 368 284)">RIGHT</text>
          <path class="ax" d="M190 325L172 208" stroke="#0000f0"/>
          <path class="ax" d="M190 325L292 372" stroke="#e00000"/>
          <path class="ax" d="M190 325L216 308" stroke="#10d010"/>
          <path d="M216 308L262 280" stroke="#c8f0c8" stroke-width="2"/>
        </svg>

        <svg class="triad" viewBox="0 0 465 510">
          <path d="M386 400V330" stroke="#1c1c7c" stroke-width="4"/>
          <path d="M386 323l9 28h-18z" fill="#1c1c7c"/>
          <path d="M389 399l24-18" stroke="#1a8a2a" stroke-width="3"/>
          <path d="M405 378h15l-6 14z" fill="#1a8a2a"/>
          <path d="M388 400l75 16" stroke="#7c1c1c" stroke-width="3"/>
          <path d="M432 402h12l2 18h-14z" fill="#7c1c1c"/>
          <text class="tx" x="388" y="316">Z</text>
          <text class="tx" x="421" y="376">Y</text>
        </svg>
      </div>
      <div class="dtabs">
        <span class="dtab"><svg class="fi"><use href="#tabf"/></svg><span>Стартовая страница</span><i class="cl0">x</i></span>
        <span class="dtab on"><svg class="fi"><use href="#tabf"/></svg><span>FemCalculixCantilever2D : 1</span><i class="cl1">x</i></span>
      </div>
    </div>
  </main>
</div>
</body>
</html>
```

FILE: styles.css
```css
* { box-sizing: border-box; }
html, body { margin: 0; height: 100%; overflow: hidden; }
body { background: #f0f0f0; color: #000; font: 12px/16px Roboto, "Noto Sans", sans-serif; }
.defs { position: absolute; width: 0; height: 0; overflow: hidden; }
.app { display: flex; flex-direction: column; height: 898px; }

/* menu */
.menu { height: 24px; background: #fff; display: flex; align-items: center; flex: none; border-bottom: 1px solid #f4f4f4; padding-left: 5px; }
.mi { white-space: nowrap; }
.m0 { width: 44px; } .m1 { width: 56px; } .m2 { width: 36.500px; } .m3 { width: 92px; } .m4 { width: 67.500px; } .m5 { width: 50px; }
.m6 { width: 45px; } .m7 { width: 44px; } .m8 { width: 53px; } .m9 { width: 116px; letter-spacing: -.1px; } .m10 { width: 44px; }

/* toolbars */
.tb { height: 34px; flex: none; display: flex; align-items: center; border-bottom: 1px solid #bdbdbd; padding-left: 2px; background: #f0f0f0; }
.tb::before { content: ""; height: 20px; border-left: 2px dotted #b4b4b4; margin-right: .45px; }
.b { width: 31.150px; height: 30px; flex: none; display: flex; align-items: center; justify-content: center; }
.tb3 .b { width: 31px; }
.tb12 .b:nth-child(3) { margin-left: 1px; }
.i { width: 26px; height: 26px; display: block; }
.act { background: #bcdcf6; outline: 1px solid #86c1f1; outline-offset: -1px; }
.split { display: flex; align-items: center; height: 30px; background: #bcdcf6; outline: 1px solid #86c1f1; outline-offset: -1px; flex: none; }
.split .dd { border-left: 1px solid #86c1f1; height: 30px; background: none; position: relative; }
.dd { width: 11px; height: 30px; flex: none; display: flex; align-items: center; justify-content: center; }
.dd::after { content: ""; border: 4px solid transparent; border-top: 4px solid #222; border-bottom-width: 0; }
.dd.off::after { border-top-color: #909090; }
.sep { width: 6px; flex: none; display: flex; justify-content: center; }
.sep::after { content: ""; width: 1px; height: 24px; background: #c8c8c8; }
.brk { width: 12px; height: 33px; flex: none; display: flex; align-items: center; }
.brk::before { content: ""; width: 1px; height: 33px; background: #c6c6c6; }
.brk::after { content: ""; height: 20px; margin-left: 4px; border-left: 2px dotted #b4b4b4; }
.more { width: 12px; flex: none; text-align: center; color: #555; font-size: 13px; margin-left: 7px; margin-right: -1px; }
.combo { width: 161px; height: 22px; flex: none; display: flex; align-items: center; background: #e2e2e2; border: 1px solid #a8a8a8; padding-left: 5px; }
.ci { width: 18px; height: 18px; }
.ct { margin-left: 3px; font-size: 11px; flex: 1; }
.cc { width: 10px; height: 10px; margin-right: 4px; }

/* icon lettering */
.whats { position: relative; }
.qm { position: absolute; left: 16px; top: 2px; font: 700 18px/20px "Liberation Sans", sans-serif; color: #2f6fb4; }
.ta-big { font: 700 30px/28px "Liberation Serif", serif; color: #f4e9a0; -webkit-text-stroke: 1px #b49a14; }
.solv { justify-content: flex-start; padding-left: 4px; align-items: baseline; color: #999; line-height: 26px; }
.s-big { font: 24px/26px "Liberation Serif", serif; }
.s-small { font: 7px/26px "Liberation Sans", sans-serif; }
.e-big { font: 700 22px/26px "Liberation Sans", sans-serif; color: #707070; }
.ti { font-family: "Liberation Sans", sans-serif; }
.d { font-size: 10px; font-weight: 700; fill: #8a8a8a; }
.n { font-size: 12px; font-weight: 700; fill: #555; text-anchor: middle; }
.z { font-size: 13px; font-style: italic; font-weight: 700; fill: #555; letter-spacing: -1.500px; }
.os { font-size: 5px; fill: #555; }
.ti-a { font: 18px/16px "Liberation Serif", serif; color: #c8c8c8; -webkit-text-stroke: .4px #999; text-align: center; letter-spacing: 0; }
.row .ti-a, .row .ti-s { letter-spacing: 0; }
.ti-s { font: 15px/16px "Liberation Serif", serif; color: #aaa; white-space: nowrap; overflow: visible; }
.ti-s small { font: 4px/16px "Liberation Sans", sans-serif; }

/* layout */
.main { flex: 1; display: flex; min-height: 0; }
.side { width: 541px; flex: none; display: flex; flex-direction: column; padding-top: 2px; }
.ptitle { height: 19px; width: 537px; background: #d9d9d9; border-bottom: 1px solid #a8a8a8; display: flex; align-items: center; padding: 0 6px 0 1px; gap: 9px; }
.ptitle span { flex: 1; }
.pbtn { width: 12px; height: 12px; margin-left: 2px; }
.tabs { height: 22px; display: flex; margin-top: 1px; align-items: flex-end; }
.tab { width: 58px; height: 19px; text-align: center; background: #eaeaea; border: 1px solid #d8d8d8; border-bottom: 0; line-height: 19px; padding-left: 2px; }
.tab.on { width: 60px; height: 22px; background: #f8f8f8; line-height: 20px; border-left: 0; padding-left: 0; }
.tree { width: 534px; height: 333px; background: #fff; border: 1px solid #a0a0a0; flex: none; }
.thead { height: 23px; display: flex; align-items: stretch; }
.th { line-height: 23px; padding-left: 3px; border-right: 1px solid #e6e6e6; }
.c1 { width: 216px; } .c2 { width: 100px; padding-left: 4px; }
.approw { height: 18px; line-height: 18px; padding-left: 2px; }
.row { height: 20px; display: flex; align-items: center; white-space: nowrap; }
.row b { font-weight: 700; }
.row span { letter-spacing: -.1px; }
.d1 { padding-left: 20px; } .d2 { padding-left: 40px; }
.dim { color: #999; }
.ch { width: 22px; height: 10px; flex: none; display: block; }
svg.ch { width: 17px; margin-right: 5px; }
.ic { width: 16px; height: 16px; flex: none; margin-right: 5.500px; }
.props { width: 528px; height: 356px; margin-top: 8px; background: #fff; border: 1px solid #8e8e8e; flex: none; }
.phead { height: 23px; display: flex; }
.ph { line-height: 24px; font-size: 11.500px; }
.c3 { width: 99px; padding-left: 4px; border-right: 1px solid #e6e6e6; } .c4 { padding-left: 4px; }
.btabs { width: 535px; height: 23px; margin-top: 2px; background: #fff; border-top: 1px solid #d4d4d4; border-bottom: 1px solid #d4d4d4; border-right: 1px solid #d4d4d4; display: flex; align-items: flex-start; font-size: 11px; }
.btab { height: 20px; width: 40px; background: #eee; border-right: 1px solid #ddd; line-height: 19px; padding-left: 9px; }
.btab.on { width: 64px; background: #fff; border-bottom: 1px solid #d4d4d4; height: 21px; line-height: 22px; padding-left: 13px; }

/* 3d view */
.center { flex: 1; display: flex; flex-direction: column; min-width: 0; }
.view { height: 744px; flex: none; position: relative; overflow: hidden; background: linear-gradient(#6f6f6f, #e2e2fd); }
.beam { position: absolute; left: 339px; top: 204px; width: 520px; height: 370px; }
.und { fill: #a8a8a8; stroke: none; }
.und-l { fill: none; stroke: #111; stroke-width: 2.500px; }
.und-l2 { fill: none; stroke: #1a1a1a; stroke-width: 5px; }
.msh { fill: none; stroke-width: 3px; }
.mark { fill: none; stroke: #8a1030; stroke-width: 4px; }
.legend { position: absolute; left: 1237px; top: 66px; height: 612px; display: flex; }
.bar { width: 37px; margin: 8px 0; background: linear-gradient(#f00 0, #ff0 25%, #0f0 50%, #0ff 75%, #00f 100%); }
.labels { list-style: none; margin: 0 0 0 8px; padding: 0; display: flex; flex-direction: column; justify-content: space-between; font: 11px/16px "DejaVu Sans Mono", monospace; letter-spacing: .3px; }
.faint { color: rgba(0,0,0,.12); }
.navcube { position: absolute; left: 1199px; top: 0; width: 165px; height: 144px; }
.nt { fill: rgba(220,225,230,.6); }
.cb { fill: #ced2d6; stroke: #2a2a2a; stroke-width: 2px; }
.cl { fill: none; stroke: #2a2a2a; stroke-width: 2px; }
.ft { font: 700 28px "Liberation Sans", sans-serif; fill: #222; }
.rt { font: 700 14px "Liberation Sans", sans-serif; fill: #444; }
.ax { fill: none; stroke-width: 4px; }
.triad { position: absolute; left: 1209px; top: 574px; width: 155px; height: 170px; }
.tx { font: 700 24px "DejaVu Sans Mono", monospace; fill: #111; }

/* document tabs */
.dtabs { flex: 1; display: flex; border-top: 1px solid #a8a8a8; padding-left: 3px; align-items: flex-start; background: #f0f0f0; }
.dtab { height: 22px; width: 164px; display: flex; align-items: center; padding: 0 12px 0 10px; background: #eaeaea; border: 1px solid #dcdcdc; border-top: 0; white-space: nowrap; font-size: 11px; }
.dtab.on { width: 199px; height: 23px; background: #fff; padding: 0 12px 0 14px; margin-top: -1px; }
.fi { width: 16px; height: 20px; margin-right: 3px; flex: none; }
.dtab > span { flex: 1; }
.dtab i { width: 14px; height: 18px; flex: none; border-radius: 2px; color: #fff; font: 700 11px/17px "Liberation Sans", sans-serif; text-align: center; }
.cl0 { background: #aaa; }
.cl1 { background: #e2583c; }
```
